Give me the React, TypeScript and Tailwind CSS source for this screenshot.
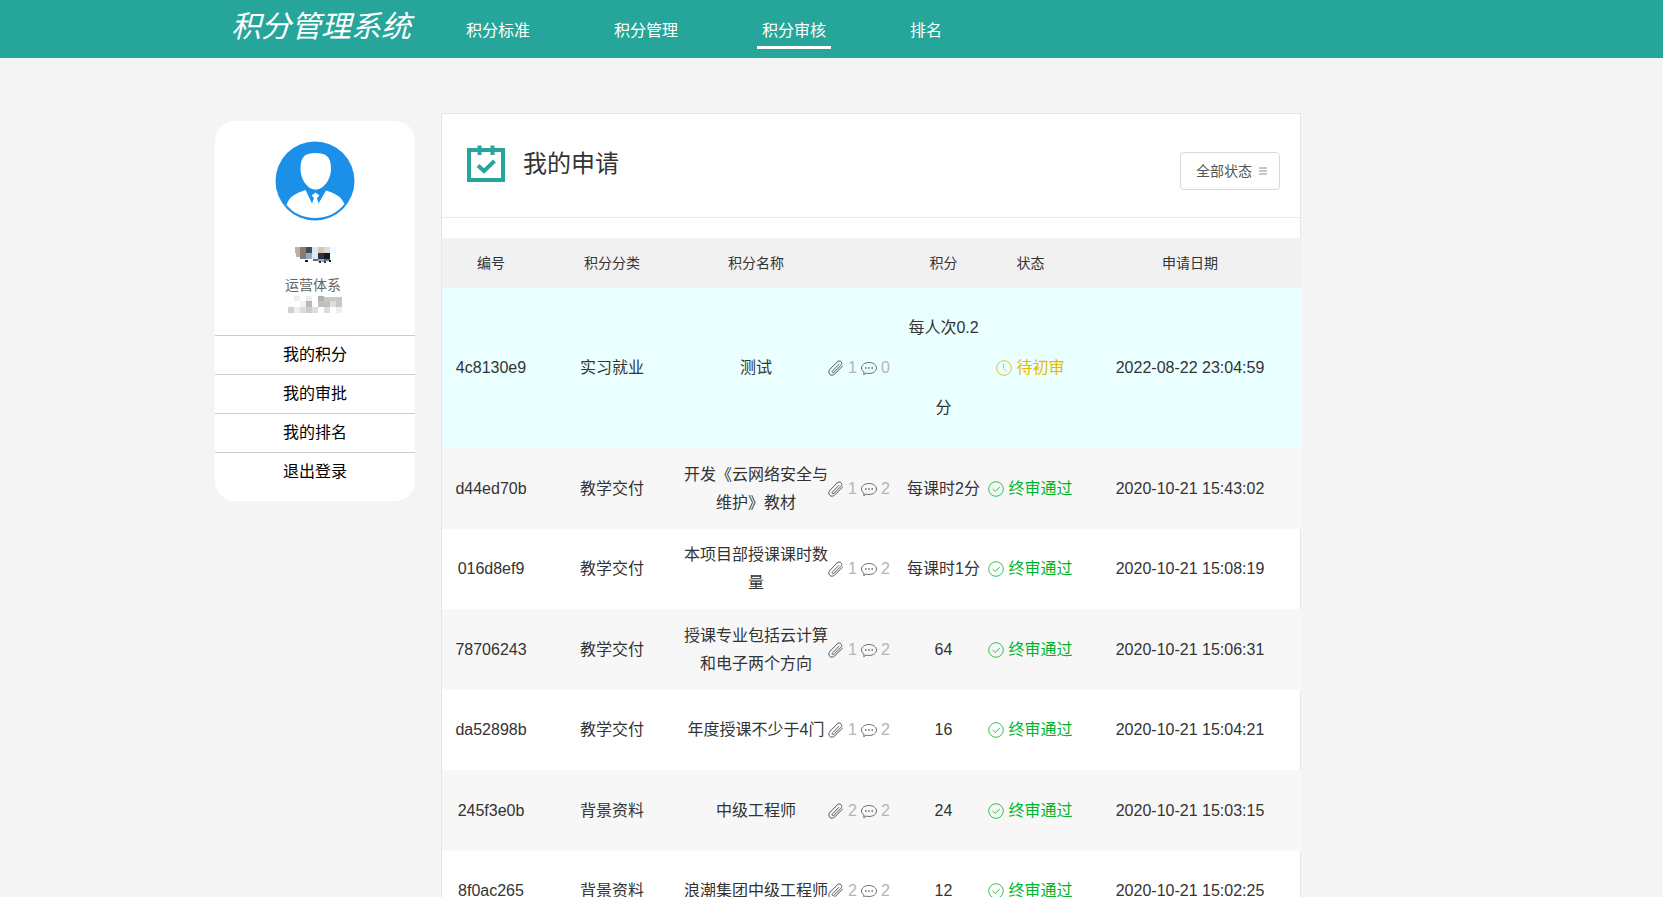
import React, { useState } from 'react';

interface Application {
  id: string;
  category: string;
  name: string;
  files: number;
  comments: number;
  score: string;
  status: 'pending' | 'passed';
  date: string;
}

const NAV_ITEMS = ['积分标准', '积分管理', '积分审核', '排名'];
const MENU_ITEMS = ['我的积分', '我的审批', '我的排名', '退出登录'];
const STATUS_OPTIONS = ['全部状态', '待初审', '终审通过'];

const APPLICATIONS: Application[] = [
  { id: '4c8130e9', category: '实习就业', name: '测试', files: 1, comments: 0, score: '每人次0.2分', status: 'pending', date: '2022-08-22 23:04:59' },
  { id: 'd44ed70b', category: '教学交付', name: '开发《云网络安全与维护》教材', files: 1, comments: 2, score: '每课时2分', status: 'passed', date: '2020-10-21 15:43:02' },
  { id: '016d8ef9', category: '教学交付', name: '本项目部授课课时数量', files: 1, comments: 2, score: '每课时1分', status: 'passed', date: '2020-10-21 15:08:19' },
  { id: '78706243', category: '教学交付', name: '授课专业包括云计算和电子两个方向', files: 1, comments: 2, score: '64', status: 'passed', date: '2020-10-21 15:06:31' },
  { id: 'da52898b', category: '教学交付', name: '年度授课不少于4门', files: 1, comments: 2, score: '16', status: 'passed', date: '2020-10-21 15:04:21' },
  { id: '245f3e0b', category: '背景资料', name: '中级工程师', files: 2, comments: 2, score: '24', status: 'passed', date: '2020-10-21 15:03:15' },
  { id: '8f0ac265', category: '背景资料', name: '浪潮集团中级工程师', files: 2, comments: 2, score: '12', status: 'passed', date: '2020-10-21 15:02:25' },
];

// masked name and masked account, [x, y, width, height, color]
const NAME_BLOCKS: [number, number, number, number, string][] = [
  [0, 0, 5, 6, '#c4b09e'], [5, 0, 6, 6, '#8f7a66'], [11, 0, 6, 6, '#424b57'], [17, 0, 6, 6, '#dce8f2'],
  [23, 0, 6, 6, '#dcc5ad'], [29, 0, 6, 6, '#dcdcdc'], [35, 0, 6, 6, '#f4faff'],
  [1, 6, 4, 4, '#b4b0b0'], [5, 6, 6, 6, '#7d7d88'], [11, 6, 6, 6, '#96aac3'], [17, 6, 6, 6, '#dce9f5'],
  [23, 6, 6, 6, '#2f3040'], [29, 6, 6, 6, '#111820'],
  [10, 13, 3, 2, '#1a1a1a'], [18, 12, 5, 2, '#6e6a70'], [23, 12, 6, 3, '#9aa4b4'], [29, 12, 6, 2, '#5a7090'],
  [24, 14, 2, 2, '#333333'], [29, 14, 2, 2, '#333333'], [34, 13, 2, 2, '#111820'],
];

const ACCOUNT_BLOCKS: [number, number, number, number, string][] = [
  [6, 0, 6, 5, '#eeeeee'], [18, 0, 6, 5, '#eeeeee'], [30, 0, 6, 5, '#b0b0b0'], [36, 1, 18, 4, '#c8c8c8'],
  [12, 5, 6, 6, '#f2f2f2'], [18, 5, 6, 6, '#b8b8b8'], [30, 5, 12, 6, '#c0c0c0'], [42, 5, 6, 6, '#dddddd'], [48, 5, 6, 6, '#c8c8c8'],
  [0, 11, 6, 6, '#d0d0d0'], [6, 11, 6, 6, '#eeeeee'], [12, 11, 6, 6, '#dddddd'], [18, 11, 6, 6, '#cccccc'],
  [24, 11, 6, 6, '#dddddd'], [36, 11, 6, 6, '#dddddd'], [48, 11, 6, 6, '#eeeeee'],
];

const Mosaic: React.FC<{ width: number; blocks: typeof NAME_BLOCKS; label: string }> = ({ width, blocks, label }) => (
  <svg width={width} height={17} role="img" aria-label={label} shapeRendering="crispEdges">
    {blocks.map(([x, y, w, h, fill], i) => (
      <rect key={i} x={x} y={y} width={w} height={h} fill={fill} />
    ))}
  </svg>
);

const Avatar = () => (
  <svg width="80" height="80" viewBox="0 0 80 80" aria-hidden="true">
    <circle cx="40" cy="40" r="39.5" fill="#1c8fe9" />
    <path
      d="M40.500 12C50 12 56 15 56 27.500C56 38 49 48.500 40.500 48.500C32 48.500 25.500 38 25.500 27.500C25.500 15 31 12 40.500 12Z"
      fill="#fff"
    />
    <path
      d="M30.500 49L37 62.500L39 57L36.500 54.500L40.500 51.500L44.500 54.500L42 57L43.500 62.500L51 49.500C59 52 66 55 69.500 63C62 72 52 77 40.500 77C28 77 18 72 11.500 64C14 55 22 52 30.500 49Z"
      fill="#fff"
    />
  </svg>
);

const CalendarIcon = () => (
  <svg width="38" height="38" viewBox="0 0 38 38" fill="none" stroke="#26a69a" aria-hidden="true">
    <rect x="2" y="5" width="34" height="30" strokeWidth="4" />
    <path d="M12.500 0.500V10M25.500 0.500V10" strokeWidth="4" />
    <path d="M11 20.500L17 26L27.500 16" strokeWidth="4" />
  </svg>
);

const PaperclipIcon = () => (
  <svg width="16" height="16" viewBox="0 0 16 16" fill="none" stroke="#555560" strokeLinecap="round" aria-hidden="true">
    <path d="M10.800 4.500L4.600 10.800C4 11.500 4 12.100 4.400 12.500C4.900 12.900 5.500 12.800 6.100 12.200L12.800 5.500C14.100 4.100 14 2.700 13 1.700C11.900 0.600 10.300 0.800 9.100 2L2.200 9C0.500 10.900 0.500 13 1.700 14.300C3 15.600 5.100 15.500 6.800 13.800L14.500 6.200" />
  </svg>
);

const CommentIcon = () => (
  <svg width="16" height="16" viewBox="0 0 16 16" fill="none" stroke="#6b6b75" aria-hidden="true">
    <path d="M8 2.500C12.300 2.500 15.500 4.900 15.500 8C15.500 11.100 12.300 13.500 8 13.500C6.900 13.500 5.900 13.400 5 13L2.800 14.800L3 12C1.400 11 0.500 9.600 0.500 8C0.500 4.900 3.700 2.500 8 2.500Z" />
    <path d="M4 8H5.600M7.200 8H8.800M10.400 8H12" strokeWidth="1.500" />
  </svg>
);

const StatusIcon: React.FC<{ status: Application['status'] }> = ({ status }) => (
  <svg width="16" height="16" viewBox="0 0 16 16" fill="none" stroke="currentColor" opacity="0.8" aria-hidden="true">
    <circle cx="8" cy="8" r="7.300" />
    {status === 'pending' ? <path d="M7.500 3.500V8.500L10.500 11.500" /> : <path d="M4.500 8L7.200 10.300L11.800 6.200" />}
  </svg>
);

const Header = () => (
  <header className="bg-[#26a69a] text-white">
    <div className="mx-auto flex h-[58px] w-full max-w-[1233px] items-center">
      <h1 className="w-[246px] shrink-0 pb-1 pl-4 text-[30px] leading-[40px] italic">积分管理系统</h1>
      <nav className="flex gap-[74px] pt-2">
        {NAV_ITEMS.map((item) => (
          <a
            key={item}
            href="#"
            className={`border-b-3 px-[5px] pb-px text-base leading-7 whitespace-nowrap ${
              item === '积分审核' ? 'border-white' : 'border-transparent'
            }`}
          >
            {item}
          </a>
        ))}
      </nav>
    </div>
  </header>
);

const Sidebar = () => (
  <aside className="mt-2 w-[200px] shrink-0 rounded-[20px] bg-white pb-[10px]">
    <div className="flex flex-col items-center pt-5">
      <Avatar />
      <div className="mt-[26px]">
        <Mosaic width={41} blocks={NAME_BLOCKS} label="姓名" />
      </div>
      <p className="mt-[10px] pr-1 text-sm leading-[22px] text-[#666]">运营体系</p>
      <Mosaic width={54} blocks={ACCOUNT_BLOCKS} label="账号" />
    </div>
    <ul className="mt-[22px]">
      {MENU_ITEMS.map((item) => (
        <li key={item} className="border-t border-[#ccc] text-center">
          <a href="#" className="block text-base leading-[38px] text-black">
            {item}
          </a>
        </li>
      ))}
    </ul>
  </aside>
);

const ApplicationRow: React.FC<{ row: Application }> = ({ row }) => {
  const pending = row.status === 'pending';
  return (
    <tr className={pending ? 'h-[160px] bg-[#eaffff]' : 'odd:h-[80px] even:h-[81px] even:bg-[#f7f7f7]'}>
      <td>{row.id}</td>
      <td>{row.category}</td>
      <td className="leading-7">{row.name}</td>
      <td>
        <div className="flex items-center gap-1 text-[#b5b5b5]">
          <PaperclipIcon />
          {row.files}
          <CommentIcon />
          {row.comments}
        </div>
      </td>
      <td className={pending ? 'leading-[80px]' : ''}>{row.score}</td>
      <td>
        <div className={`flex items-center justify-center gap-1 ${pending ? 'text-[#e6b800]' : 'text-[#00b42a]'}`}>
          <StatusIcon status={row.status} />
          {pending ? '待初审' : '终审通过'}
        </div>
      </td>
      <td className="pr-[2px]">{row.date}</td>
    </tr>
  );
};

const App: React.FC = () => {
  const [status, setStatus] = useState(STATUS_OPTIONS[0]);

  return (
    <div
      lang="zh-CN"
      className="min-h-screen bg-[#f4f4f4] font-['Liberation_Sans','Noto_Sans_CJK_SC',sans-serif] text-base text-[#333]"
    >
      <Header />
      <div className="mx-auto flex w-full max-w-[1233px] items-start gap-[26px] pt-[55px]">
        <Sidebar />
        <main className="min-w-0 max-w-[860px] flex-1 border border-[#e6e6e6] bg-white">
          <div className="flex h-[104px] items-center justify-between border-b border-[#ebebeb] pr-5 pl-[25px]">
            <div className="flex items-center gap-[18px] pb-1">
              <CalendarIcon />
              <h2 className="text-2xl">我的申请</h2>
            </div>
            <label className="mt-[10px] flex h-[38px] w-[100px] items-center rounded border border-[#d9d9d9] pl-[15px] text-[#555]">
              <select
                aria-label="状态"
                value={status}
                onChange={(e) => setStatus(e.target.value)}
                className="w-[63px] appearance-none bg-transparent text-sm outline-none"
              >
                {STATUS_OPTIONS.map((option) => (
                  <option key={option}>{option}</option>
                ))}
              </select>
              <svg width="8" height="8" viewBox="0 0 8 8" fill="#c8c8c8" aria-hidden="true">
                <path d="M0 0H8V2H0ZM0 3H8V5H0ZM0 6H8V8H0Z" />
              </svg>
            </label>
          </div>
          <table className="mt-5 w-[calc(100%+2px)] table-fixed text-center">
            <colgroup>
              <col className="w-[98px]" />
              <col className="w-[144px]" />
              <col className="w-[144px]" />
              <col className="w-[78px]" />
              <col className="w-[75px]" />
              <col className="w-[99px]" />
              <col />
            </colgroup>
            <thead>
              <tr className="h-[50px] bg-[#f1f1f1] text-sm [&>th]:font-normal">
                <th>编号</th>
                <th>积分分类</th>
                <th>积分名称</th>
                <th></th>
                <th>积分</th>
                <th>状态</th>
                <th className="pr-[2px]">申请日期</th>
              </tr>
            </thead>
            <tbody>
              {APPLICATIONS.map((row) => (
                <ApplicationRow key={row.id} row={row} />
              ))}
            </tbody>
          </table>
        </main>
      </div>
    </div>
  );
};

export default App;
